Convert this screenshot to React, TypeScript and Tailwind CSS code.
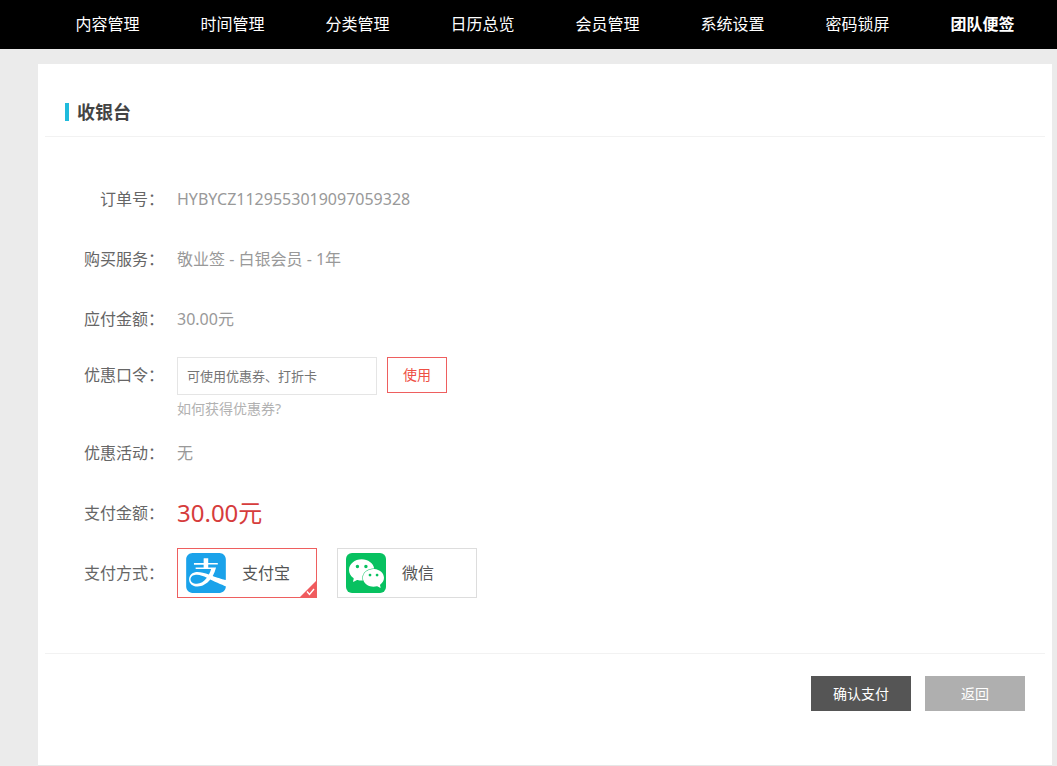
import type { ReactNode } from "react";
import { SiAlipay, SiWechat } from "react-icons/si";

const navItems = [
  "内容管理",
  "时间管理",
  "分类管理",
  "日历总览",
  "会员管理",
  "系统设置",
  "密码锁屏",
  "团队便签",
];

function Row({ label, children }: { label: string; children: ReactNode }) {
  return (
    <div className="flex h-[60px] items-center">
      <div className="w-[119px] shrink-0 text-right text-[#666]">{label}</div>
      <div className="ml-[13px] text-[#999]">{children}</div>
    </div>
  );
}

function PayOption({
  value,
  text,
  icon,
  checked,
}: {
  value: string;
  text: string;
  icon: ReactNode;
  checked?: boolean;
}) {
  return (
    <label className="relative flex h-[50px] w-[140px] cursor-pointer items-center border border-[#ddd] pl-2 text-[#555] has-checked:border-[#ee5f5f]">
      <input
        type="radio"
        name="pay"
        value={value}
        defaultChecked={checked}
        className="peer absolute inset-0 appearance-none"
      />
      {icon}
      <span className="ml-4">{text}</span>
      <svg
        className="absolute right-0 bottom-0 hidden h-4 w-4 peer-checked:block"
        viewBox="0 0 16 16"
      >
        <path d="M16 0v16H0z" fill="#f05b5e" />
        <path d="M7 10.5l2.5 3L14 8" fill="none" stroke="#fff" strokeWidth="1.4" />
      </svg>
    </label>
  );
}

export default function App() {
  return (
    <div className="min-h-screen bg-[#ebebeb] font-['Noto_Sans','Noto_Sans_CJK_SC',sans-serif] text-base leading-6">
      <nav className="bg-black">
        <div className="mr-3 ml-[45px] grid h-[49px] grid-cols-8 items-center pb-0.5">
          {navItems.map((item) => (
            <a
              key={item}
              href="#"
              className="text-center whitespace-nowrap text-white last:font-bold"
            >
              {item}
            </a>
          ))}
        </div>
      </nav>

      <main className="mt-[15px] mr-[5px] ml-[38px] border-b border-[#e6e6e6] bg-white px-[7px]">
        <div className="flex h-[73px] items-end border-b border-[#f2f2f2] pb-2.5 pl-5">
          <div className="flex items-center">
            <span className="mr-2 h-[18px] w-1 bg-[#1fbbdc]" />
            <h1 className="text-lg leading-7 font-bold text-[#444]">收银台</h1>
          </div>
        </div>

        <form>
          <div className="pt-8 pb-[50px]">
            <Row label="订单号：">HYBYCZ1129553019097059328</Row>
            <Row label="购买服务：">敬业签 - 白银会员 - 1年</Row>
            <Row label="应付金额：">30.00元</Row>

            <div className="flex items-start pt-2">
              <label
                htmlFor="coupon"
                className="w-[119px] shrink-0 text-right leading-9 text-[#666]"
              >
                优惠口令：
              </label>
              <div className="ml-[13px]">
                <div className="flex items-start">
                  <input
                    id="coupon"
                    type="text"
                    placeholder="可使用优惠券、打折卡"
                    className="h-[38px] w-[200px] border border-[#e5e5e5] px-[9px] text-[13px] placeholder:text-[#757575]"
                  />
                  <button
                    type="button"
                    className="ml-2.5 h-9 w-[60px] border border-[#ee5f5f] text-sm text-[#ee4f45]"
                  >
                    使用
                  </button>
                </div>
                <a href="#" className="block text-sm leading-7 text-[#b2b2b2]">
                  如何获得优惠券?
                </a>
              </div>
            </div>

            <Row label="优惠活动：">无</Row>
            <Row label="支付金额：">
              <span className="text-2xl text-[#d63c3c]">30.00元</span>
            </Row>
            <Row label="支付方式：">
              <div className="flex gap-5">
                <PayOption
                  value="alipay"
                  text="支付宝"
                  checked
                  icon={<SiAlipay className="h-10 w-10 text-[#1aa2ea]" />}
                />
                <PayOption
                  value="wechat"
                  text="微信"
                  icon={
                    <span className="flex h-10 w-10 items-center justify-center rounded-md bg-[#07c160]">
                      <SiWechat className="h-[35px] w-[35px] text-white" />
                    </span>
                  }
                />
              </div>
            </Row>
          </div>

          <div className="flex justify-end gap-3.5 border-t border-[#f2f2f2] pt-[22px] pr-5 pb-[54px] text-sm text-white">
            <button type="button" className="h-[35px] w-[100px] bg-[#555]">
              确认支付
            </button>
            <button type="button" className="h-[35px] w-[100px] bg-[#afafaf]">
              返回
            </button>
          </div>
        </form>
      </main>
    </div>
  );
}
